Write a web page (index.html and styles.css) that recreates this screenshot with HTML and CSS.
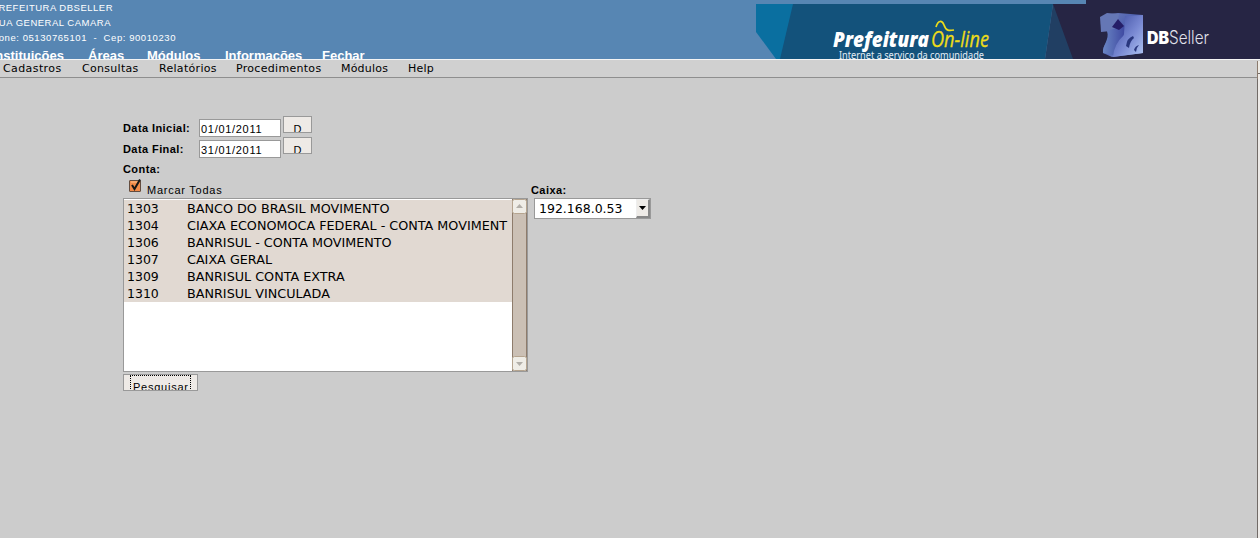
FILE: index.html
```html
<!DOCTYPE html>
<html lang="pt-BR">
<head>
<meta charset="utf-8">
<title>Prefeitura On-line</title>
<link rel="stylesheet" href="styles.css">
</head>
<body>
<header class="top">
  <div class="org">
    <p class="org-line org-name">PREFEITURA DBSELLER</p>
    <p class="org-line org-street">RUA GENERAL CAMARA</p>
    <p class="org-line org-phone">Fone: 05130765101 &nbsp;- &nbsp;Cep: 90010230</p>
    <nav class="main-nav"><a class="first">Instituições</a><a>Áreas</a><a>Módulos</a><a>Informações</a><a>Fechar</a></nav>
  </div>
  <svg class="banner" width="504" height="59" viewBox="756 0 504 59">
    <defs>
      <linearGradient id="cube" x1="0" y1="0" x2="1" y2="1"><stop offset="0" stop-color="#7181bd"/><stop offset=".45" stop-color="#4c5eae"/><stop offset="1" stop-color="#a7b8ee"/></linearGradient>
      <linearGradient id="face" x1="0" y1="0" x2="1" y2="1"><stop offset="0" stop-color="#39489c"/><stop offset=".55" stop-color="#7888d2"/><stop offset="1" stop-color="#b0c5f3"/></linearGradient>
      <linearGradient id="body" x1="0" y1="0" x2="1" y2="0"><stop offset="0" stop-color="#6a86c4"/><stop offset="1" stop-color="#3c459f"/></linearGradient>
    </defs>
    <path d="M756 4H795V59H776L756 32Z" fill="#0a6fa0"/>
    <path d="M793 4H1053L1045 59H780Z" fill="#13527b"/>
    <path d="M1053 4H1058L1074 59H1045Z" fill="#213f63"/>
    <path d="M1053 4H1086V0H1260V59H1073Z" fill="#262544"/>
    <path d="M1111 14L1118 13L1143 15V53L1112 57L1103 53C1102 45 1110 40 1111 31Z" fill="url(#cube)"/>
    <path d="M1100 17L1107 13L1119 14L1117 28L1111 31L1101 32Z" fill="#6577b5"/>
    <path d="M1107 31L1126 25L1123 38Q1116 44 1117 56L1103 53C1102 45 1110 40 1107 31Z" fill="url(#body)"/>
    <path d="M1125 16L1143 15V53L1113 57Q1114 44 1124 35Z" fill="url(#face)"/>
    <path d="M1112 27L1118 19L1124 26L1119 30Z" fill="#251e68"/>
    <path d="M1126 46Q1127 38 1133 36L1134 38Q1130 41 1129 48ZM1134 50Q1135 46 1139 45Q1136 48 1136 52Z" fill="#29377e"/>
    <text class="brand" x="833" y="47" textLength="96" lengthAdjust="spacingAndGlyphs">Prefeitura</text>
    <text class="online" x="931" y="47" textLength="58" lengthAdjust="spacingAndGlyphs">On-line</text>
    <path d="M936 27C938 20 942 20 944 25C946 31 949 31 954 30" fill="none" stroke="#eedc19" stroke-width="1.7"/>
    <text class="slogan" x="839" y="59" textLength="145" lengthAdjust="spacingAndGlyphs">Internet a serviço da comunidade</text>
    <text class="db" x="1147" y="43.5" textLength="22" lengthAdjust="spacingAndGlyphs">DB</text>
    <text class="seller" x="1169" y="43.5" textLength="40" lengthAdjust="spacingAndGlyphs">Seller</text>
  </svg>
</header>
<nav class="sub-nav"><a>Cadastros</a><a>Consultas</a><a>Relatórios</a><a>Procedimentos</a><a>Módulos</a><a>Help</a><i class="page-scroll"></i></nav>
<main>
  <div class="dates">
    <div class="field"><label>Data Inicial:</label><span class="input">01/01/2011</span><span class="btn pick">D</span></div>
    <div class="field"><label>Data Final:</label><span class="input">31/01/2011</span><span class="btn pick">D</span></div>
  </div>
  <div class="columns">
    <section class="accounts">
      <h2 class="label">Conta:</h2>
      <div class="mark">
        <svg width="16" height="16" viewBox="0 0 16 16"><rect x="2.5" y="3.5" width="11" height="11" rx=".5" fill="#f28b49" stroke="#634d40"/><path d="M4 5H11" stroke="#ffc08c"/><path d="M5 8L7.5 12L13 2.5" fill="none" stroke="#151515" stroke-width="2"/></svg>
        <span>Marcar Todas</span>
      </div>
      <div class="listbox">
        <ul>
          <li><b>1303</b><span>BANCO DO BRASIL MOVIMENTO</span></li>
          <li><b>1304</b><span>CIAXA ECONOMOCA FEDERAL - CONTA MOVIMENT</span></li>
          <li><b>1306</b><span>BANRISUL - CONTA MOVIMENTO</span></li>
          <li><b>1307</b><span>CAIXA GERAL</span></li>
          <li><b>1309</b><span>BANRISUL CONTA EXTRA</span></li>
          <li><b>1310</b><span>BANRISUL VINCULADA</span></li>
        </ul>
        <div class="scroll">
          <svg width="15" height="15"><rect x=".5" y=".5" width="14" height="14" rx="2" fill="#efede7" stroke="#b5a48f"/><path d="M4 9H11L7.5 5Z" fill="#b2afa9"/></svg>
          <svg width="15" height="15"><rect x=".5" y=".5" width="14" height="14" rx="2" fill="#efede7" stroke="#b5a48f"/><path d="M4 6H11L7.5 10Z" fill="#b2afa9"/></svg>
        </div>
      </div>
      <div class="btn search"><span>Pesquisar</span></div>
    </section>
    <section class="cashier">
      <h2 class="label">Caixa:</h2>
      <div class="select"><span>192.168.0.53</span><i class="drop"><svg width="8" height="5"><path d="M0 0H7L3.5 4Z" fill="#000"/></svg></i></div>
    </section>
  </div>
</main>
</body>
</html>
```
FILE: styles.css
```css
* { box-sizing: border-box; }
body { margin: 0; height: 538px; overflow: hidden; background: #eeebe8; color: #000; font-family: "Liberation Sans", Arial, sans-serif; }
p, h2, ul { margin: 0; padding: 0; }
.top { display: flex; justify-content: space-between; height: 59px; overflow: hidden; background: #5786b3; color: #fff; }
.org-line { display: flex; justify-content: flex-end; height: 15px; font-size: 9.5px; line-height: 16px; white-space: nowrap; }
.org-name { width: 113px; letter-spacing: .5px; }
.org-street { width: 111px; letter-spacing: .5px; }
.org-phone { width: 176px; letter-spacing: .57px; }
.main-nav { display: grid; grid-template-columns: 64px 83px 78px 97px 60px; padding-top: 3px; font-size: 13px; font-weight: bold; line-height: 16px; white-space: nowrap; }
.main-nav a:nth-child(2) { padding-left: 24px; }
.main-nav .first { display: flex; justify-content: flex-end; }
.banner { display: block; }
.brand { font: italic 800 21px "Open Sans", sans-serif; fill: #fff; }
.online { font: italic 22px "Open Sans", sans-serif; fill: #eedc19; stroke: #eedc19; stroke-width: .3px; }
.slogan { font: 10px "Noto Sans", sans-serif; fill: #e4eef6; }
.db { font: 900 17px Inter, sans-serif; fill: #fff; }
.seller { font: 300 18px Inter, sans-serif; fill: #e2e1ea; }
.sub-nav { display: grid; grid-template-columns: 79px 77px 77px 105px 67px 1fr 3px; height: 19px; padding-left: 3px; border-top: 1px solid #f4f4f4; border-bottom: 1px solid #8e8e8e; background: #d0d0d0; font: 11px/17px "DejaVu Sans", sans-serif; letter-spacing: .2px; }
.sub-nav a:first-child { letter-spacing: .4px; }
.sub-nav a:nth-child(2), .sub-nav a:nth-child(3), .sub-nav a:nth-child(4) { letter-spacing: .3px; }
.page-scroll { height: 18px; margin-top: 1px; border-left: 1px solid #8b7b6e; background: linear-gradient(#eeebe5 12px, #716b67 12px, #716b67 13px, #eeebe8 13px); }
main { height: 460px; padding: 38px 0 0 123px; border-right: 1px solid #716b67; margin-right: 2px; background: #ccc; }
.dates { display: grid; row-gap: 3px; }
.field { display: grid; grid-template-columns: 75px 81px 30px; column-gap: 1px; align-items: start; height: 18px; }
.field label, .label { font-size: 11px; font-weight: bold; line-height: 14px; letter-spacing: .42px; white-space: nowrap; }
.field label { padding-top: 5px; }
.input { width: 82px; height: 18px; margin-top: 3px; padding: 2px 0 0 1px; border: 1px solid #999; background: #fff; font-size: 11px; line-height: 14px; letter-spacing: .7px; }
.btn { overflow: hidden; border: 1px solid #999; background: #eeeae6; font-size: 11px; }
.pick { width: 29px; height: 17px; margin-left: 2px; padding-top: 5px; line-height: 14px; text-align: center; }
.columns { display: flex; gap: 3px; padding-top: 7px; }
.accounts { width: 405px; }
.mark { display: flex; align-items: center; height: 22px; padding-left: 4px; gap: 4px; font-size: 11px; letter-spacing: .75px; }
.mark svg { margin-top: -4px; }
.mark span { padding-top: 5px; }
.listbox { display: flex; width: 405px; height: 174px; border: 1px solid #999; background: #fff; }
.listbox ul { flex: 1; padding-top: 1px; list-style: none; font: 12.75px/18px "DejaVu Sans", sans-serif; }
.listbox li { display: grid; grid-template-columns: 60px 1fr; height: 17px; padding-left: 3px; background: #e1d9d2; white-space: nowrap; }
.listbox b { font-weight: normal; font-size: 12.5px; }
.scroll { display: flex; flex-direction: column; justify-content: space-between; width: 15px; background: #cbc0b5; border-right: 1px solid #8e7c6c; border-left: 1px solid #8e7c6c; }
.scroll svg { display: block; margin-left: -1px; }
.search { width: 75px; height: 17px; margin-top: 2px; padding-left: 6px; }
.search span { display: block; width: 61px; height: 20px; padding: 4px 0 0 2px; border: 1px dotted #000; line-height: 14px; letter-spacing: .75px; white-space: nowrap; }
.cashier { padding-top: 21px; }
.select { display: flex; justify-content: space-between; width: 117px; height: 21px; margin: 1px 0 0 3px; padding-left: 4px; border: 1px solid #999; background: #fff; font: 12.5px/20px "DejaVu Sans", sans-serif; }
.drop { display: flex; align-items: center; justify-content: center; width: 14px; height: 19px; border: 1px solid #eee; border-right: 2px solid #888; border-bottom: 2px solid #888; background: #eeebe7; }
```
